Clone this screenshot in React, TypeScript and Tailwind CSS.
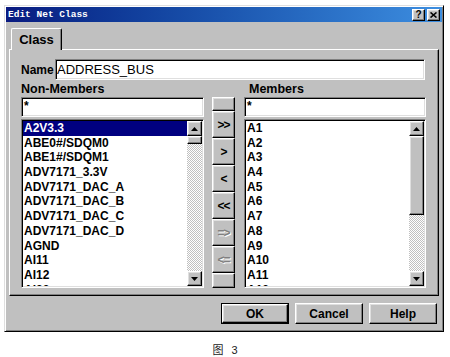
import React from "react";

const raised =
  "border border-t-white border-l-white border-b-black border-r-black shadow-[inset_-1px_-1px_0_#808080,inset_1px_1px_0_#dfdfdf] bg-[#c0c0c0]";
const sunken =
  "border border-t-[#808080] border-l-[#808080] border-b-white border-r-white shadow-[inset_1px_1px_0_#000,inset_-1px_-1px_0_#dfdfdf] bg-white";

function Arrow({ up }: { up: boolean }) {
  return (
    <div className={raised + " w-[15px] h-[15px] flex items-center justify-center shrink-0"}>
      <svg width="7" height="4" viewBox="0 0 7 4">
        {up ? <polygon points="3.5,0 7,4 0,4" fill="#000" /> : <polygon points="0,0 7,0 3.5,4" fill="#000" />}
      </svg>
    </div>
  );
}

function ScrollBar({ thumb }: { thumb: string }) {
  return (
    <div className="w-[15px] h-full flex flex-col shrink-0">
      <Arrow up />
      <div className="flex-1 flex flex-col bg-[repeating-conic-gradient(#c0c0c0_0_25%,#ffffff_0_50%)] bg-[length:2px_2px]">
        <div className={raised + " w-[15px] " + thumb} />
      </div>
      <Arrow up={false} />
    </div>
  );
}

function List({ items, selected, thumb }: { items: string[]; selected?: number; thumb: string }) {
  return (
    <div className={sunken + " mt-[2px] h-[169px] p-[1px] flex overflow-hidden"}>
      <div className="flex-1 overflow-hidden">
        {items.map((t, i) => (
          <div
            key={t}
            className={
              "h-[14.7px] leading-[14.7px] pl-[1px] text-[12px] font-bold whitespace-nowrap " +
              (i === selected ? "bg-[#000080] text-white" : "text-black")
            }
          >
            {t}
          </div>
        ))}
      </div>
      <ScrollBar thumb={thumb} />
    </div>
  );
}

function MidBtn({ children, h, disabled }: { children?: React.ReactNode; h: string; disabled?: boolean }) {
  return (
    <div
      className={
        raised +
        " w-[23px] flex items-center justify-center text-[12px] font-bold tracking-[-1px] leading-none " +
        h +
        (disabled ? " text-[#808080] [text-shadow:1px_1px_0_#ffffff]" : " text-black")
      }
    >
      {children}
    </div>
  );
}

function TitleBtn({ children }: { children: React.ReactNode }) {
  return (
    <div className={raised + " w-[13px] h-[12px] flex items-center justify-center text-[10px] font-bold leading-none text-black"}>
      {children}
    </div>
  );
}

function DlgBtn({ label, def }: { label: string; def?: boolean }) {
  const inner = (
    <div className={raised + " w-full h-full flex items-center justify-center text-[12px] font-bold text-black"}>{label}</div>
  );
  return def ? (
    <div className="w-[68px] h-[21px] border border-black">{inner}</div>
  ) : (
    <div className="w-[68px] h-[21px]">{inner}</div>
  );
}

const left = [
  "A2V3.3",
  "ABE0#/SDQM0",
  "ABE1#/SDQM1",
  "ADV7171_3.3V",
  "ADV7171_DAC_A",
  "ADV7171_DAC_B",
  "ADV7171_DAC_C",
  "ADV7171_DAC_D",
  "AGND",
  "AI11",
  "AI12",
  "AI22",
];
const right = ["A1", "A2", "A3", "A4", "A5", "A6", "A7", "A8", "A9", "A10", "A11", "A12"];

export default function App() {
  return (
    <div className="w-[450px] h-[357px] bg-white font-['Liberation_Sans',Arial,sans-serif] text-black overflow-hidden">
      <div className="pt-[5px] pl-[4px]">
        <div className="w-[440px] h-[327px] bg-[#c0c0c0] border border-t-[#dfdfdf] border-l-[#dfdfdf] border-b-black border-r-black shadow-[inset_1px_1px_0_#fff,inset_-1px_-1px_0_#808080] p-[1px] flex flex-col">
          {/* title bar */}
          <div className="h-[15px] shrink-0 flex items-center bg-gradient-to-r from-[#0a1a80] to-[#3d8ee0] pl-[2px] pr-[2px]">
            <span className="font-['Liberation_Mono',monospace] font-bold text-[9.5px] text-white leading-none">
              Edit Net Class
            </span>
            <div className="ml-auto flex gap-[2px]">
              <TitleBtn>?</TitleBtn>
              <TitleBtn>
                <svg width="7" height="6" viewBox="0 0 7 6">
                  <path d="M0.5 0.5 L6.5 5.5 M6.5 0.5 L0.5 5.5" stroke="#000" strokeWidth="1.6" />
                </svg>
              </TitleBtn>
            </div>
          </div>

          <div className="mt-[6px] ml-[3px] w-[430px]">
            {/* tab */}
            <div className="flex pl-[2px] h-[21px] items-end">
              <div className="relative z-10 w-[51px] h-[22px] -mb-[1px] bg-[#c0c0c0] border-t border-l border-r border-t-white border-l-white border-r-black rounded-t-[2px] shadow-[inset_-1px_0_0_#808080] flex items-center justify-center font-bold text-[13px]">
                Class
              </div>
            </div>
            {/* panel */}
            <div className="h-[247px] border border-t-white border-l-white border-b-black border-r-black shadow-[inset_-1px_-1px_0_#808080] pt-[9px] pl-[11px]">
              <div className="flex items-center h-[21px]">
                <div className="w-[34px] text-[12px] font-bold">Name</div>
                <div className={sunken + " w-[370px] h-[21px] flex items-center text-[13px] pl-[1px]"}>ADDRESS_BUS</div>
              </div>
              <div className="flex mt-[1px]">
                <div className="w-[183px]">
                  <div className="h-[16px] flex items-center text-[12.5px] font-bold">Non-Members</div>
                  <div className={sunken + " h-[20px] pl-[2px] pt-[1px] text-[12px] font-bold leading-[14px]"}>*</div>
                  <List items={left} selected={0} thumb="h-[8px]" />
                </div>
                <div className="w-[23px] ml-[8px] pt-[16px] flex flex-col">
                  <MidBtn h="h-[14px]" />
                  <MidBtn h="h-[27px]">{">>"}</MidBtn>
                  <MidBtn h="h-[27px]">{">"}</MidBtn>
                  <MidBtn h="h-[27px]">{"<"}</MidBtn>
                  <MidBtn h="h-[27px]">{"<<"}</MidBtn>
                  <MidBtn h="h-[27px]" disabled>
                    {"=>"}
                  </MidBtn>
                  <MidBtn h="h-[27px]" disabled>
                    {"<="}
                  </MidBtn>
                  <MidBtn h="h-[15px]" />
                </div>
                <div className="w-[182px] ml-[9px]">
                  <div className="h-[16px] flex items-center pl-[5px] text-[12.5px] font-bold">Members</div>
                  <div className={sunken + " h-[20px] pl-[2px] pt-[1px] text-[12px] font-bold leading-[14px]"}>*</div>
                  <List items={right} thumb="h-[79px]" />
                </div>
              </div>
            </div>
            {/* buttons */}
            <div className="mt-[7px] flex justify-end gap-[6px] pr-[2px]">
              <DlgBtn label="OK" def />
              <DlgBtn label="Cancel" />
              <DlgBtn label="Help" />
            </div>
          </div>
        </div>
      </div>
      <div className="mt-[11px] text-center text-[11px] leading-[14px] text-[#222] [word-spacing:5px] font-['Liberation_Sans','Noto_Sans_CJK_SC',sans-serif]">
        图 3
      </div>
    </div>
  );
}
